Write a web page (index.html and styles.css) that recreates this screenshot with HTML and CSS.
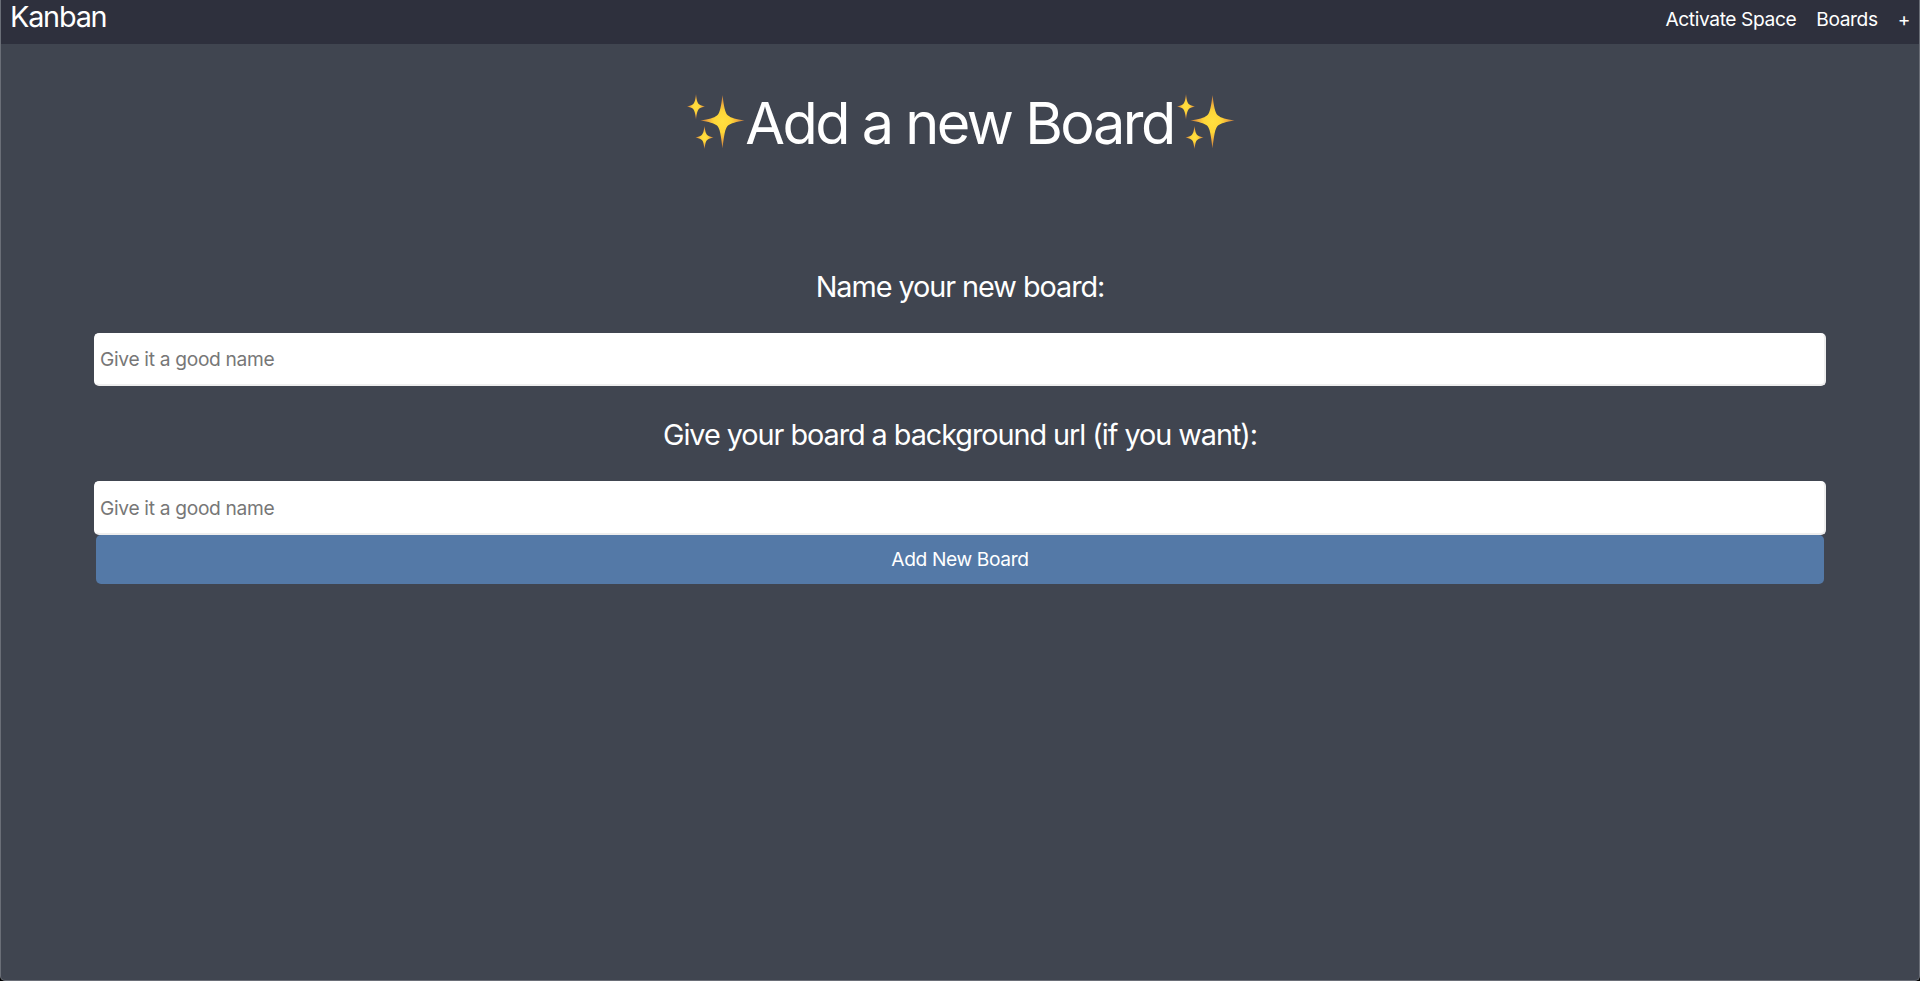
FILE: index.html
```html
<!DOCTYPE html>
<html lang="en">
<head>
<meta charset="utf-8">
<title>Kanban</title>
<link rel="stylesheet" href="styles.css">
</head>
<body>
<div class="window">
  <header class="navbar">
    <a class="brand">Kanban</a>
    <nav class="links"><a>Activate Space</a><a>Boards</a><a class="plus">+</a></nav>
  </header>
  <main>
    <svg width="0" height="0" class="defs" aria-hidden="true">
      <defs>
        <radialGradient id="gold">
          <stop offset="0" stop-color="#ffe040"/>
          <stop offset=".4" stop-color="#fed638"/>
          <stop offset=".7" stop-color="#eda83c"/>
          <stop offset="1" stop-color="#b8753f"/>
        </radialGradient>
        <symbol id="sparkles" viewBox="0 0 58 56">
          <path fill="url(#gold)" d="M35.500 1C37 13 38 19 41 21.500C44 24 49 25 57.500 26.500C49 28 44 29 41 31.500C38 34 37 42 35.500 54.500C34 42 33 34 30 31.500C27 29 22 28 13.500 26.500C22 25 27 24 30 21.500C33 19 34 13 35.500 1Z"/>
          <path fill="url(#gold)" d="M9 0C9.800 7 10.500 9 12 10.200C13.500 11.500 15 11.800 18 12.500C15 13.200 13.500 13.500 12 14.800C10.500 16.500 9.800 19 9 25.500C8.200 19 7.500 16.500 6 14.800C4.500 13.500 3 13.200 0 12.500C3 11.800 4.500 11.500 6 10.200C7.500 9 8.200 7 9 0Z"/>
          <path fill="url(#gold)" d="M17.500 32C18.300 38 19 40 20.500 41.200C22 42.500 23.500 42.800 26.500 43.500C23.500 44.200 22 44.500 20.500 45.800C19 47 18.300 49 17.500 55C16.700 49 16 47 14.500 45.800C13 44.500 11.500 44.200 8.500 43.500C11.500 42.800 13 42.500 14.500 41.200C16 40 16.700 38 17.500 32Z"/>
        </symbol>
      </defs>
    </svg>
    <h1 class="title"><svg class="sparkles"><use href="#sparkles"/></svg><span class="title-text">Add a new Board</span><svg class="sparkles"><use href="#sparkles"/></svg></h1>
    <form class="form">
      <label class="label" for="name">Name your new board:</label>
      <input class="field" id="name" placeholder="Give it a good name">
      <label class="label label-url" for="url">Give your board a background url (if you want):</label>
      <input class="field field-url" id="url" placeholder="Give it a good name">
      <button class="submit" type="button">Add New Board</button>
    </form>
  </main>
</div>
</body>
</html>
```
FILE: styles.css
```css
* { box-sizing: border-box; }
body {
  margin: 0;
  background: #000;
  color: #fff;
  font: 19.2px/24px Inter, "Liberation Sans", sans-serif;
}
.window {
  height: 981px;
  overflow: hidden;
  background: #404550;
  border: 1px solid #6a6e77;
  border-top: 0;
  border-radius: 0 0 5px 5px;
}
.navbar {
  display: flex;
  justify-content: space-between;
  height: 44px;
  padding: 0 9px 0 9px;
  background: #2e303d;
}
.brand { font-size: 28.8px; line-height: 34px; letter-spacing: -1.2px; }
.links { display: flex; gap: 20px; padding-top: 7px; letter-spacing: -0.4px; }
.defs { display: block; }
.title {
  display: flex;
  justify-content: center;
  align-items: flex-start;
  height: 68px;
  margin: 44px 0 0;
  padding: 6px 0 0 2px;
  font-size: 57.6px;
  line-height: 58px;
  font-weight: 400;
}
.title-text { margin-right: 3px; letter-spacing: -2.5px; white-space: nowrap; }
.sparkles { flex: none; width: 58px; height: 56px; }
.form { display: flex; flex-direction: column; padding: 111px 93px 0; }
.label {
  height: 66px;
  font-size: 28.8px;
  line-height: 40px;
  text-align: center;
  letter-spacing: -1.04px;
}
.label-url { margin-top: 29px; }
.field {
  height: 53px;
  padding: 0 4px 1px;
  border: 2px solid #eee;
  border-top-color: #fff;
  border-left-color: #fff;
  border-radius: 5px;
  background: #fff;
  font: inherit;
  letter-spacing: -0.32px;
}
.field-url { height: 54px; }
.field::placeholder { color: #777; }
.submit {
  height: 49px;
  margin: 0 2px;
  padding: 0 0 2px;
  border: 0;
  border-radius: 5px;
  background: #5479a7;
  color: #fff;
  font: inherit;
  letter-spacing: -0.38px;
}
```
